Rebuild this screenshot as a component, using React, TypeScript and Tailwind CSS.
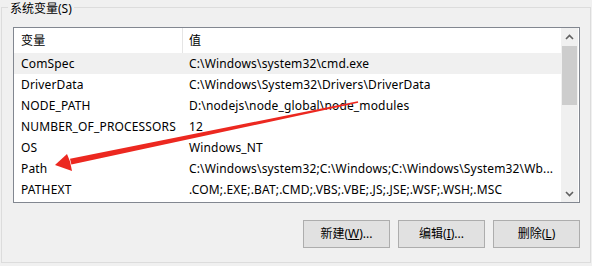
import React from "react";

const rows: [string, string][] = [
  ["ComSpec", "C:\\Windows\\system32\\cmd.exe"],
  ["DriverData", "C:\\Windows\\System32\\Drivers\\DriverData"],
  ["NODE_PATH", "D:\\nodejs\\node_global\\node_modules"],
  ["NUMBER_OF_PROCESSORS", "12"],
  ["OS", "Windows_NT"],
  ["Path", "C:\\Windows\\system32;C:\\Windows;C:\\Windows\\System32\\Wb..."],
  ["PATHEXT", ".COM;.EXE;.BAT;.CMD;.VBS;.VBE;.JS;.JSE;.WSF;.WSH;.MSC"],
];

function Chevron({ up }: { up: boolean }) {
  return (
    <svg width="9" height="6" viewBox="0 0 9 6">
      <polyline
        points={up ? "1,5 4.5,1.5 8,5" : "1,1 4.5,4.5 8,1"}
        fill="none"
        stroke="#606060"
        strokeWidth="1.6"
      />
    </svg>
  );
}

export default function App() {
  return (
    <div
      className="relative w-[592px] h-[266px] bg-[#f0f0f0] text-[12px] text-black overflow-hidden"
      style={{ fontFamily: '"Noto Sans", "Noto Sans CJK SC", sans-serif' }}
    >
      <div className="relative ml-[1px] mt-[7px] w-[590px] h-[256px] border border-[#dcdcdc]">
        <div className="absolute left-[6px] top-[-7px] bg-[#f0f0f0] px-[2px] leading-[15px]">
          系统变量(S)
        </div>
        <div className="ml-[11px] mt-[19px] w-[567px] h-[176px] border border-[#828790] bg-white flex">
          <div className="w-[547px] flex flex-col tracking-[0.15px]">
            <div className="flex h-[25px] items-center">
              <div className="w-[168px] h-full flex items-center pl-[7px]">变量</div>
              <div className="w-[1px] h-full bg-[#e5e5e5]" />
              <div className="flex-1 pl-[6px]">值</div>
            </div>
            {rows.map(([k, v], i) => (
              <div
                key={k}
                className={`flex h-[21px] items-center whitespace-nowrap ${i === 0 ? "bg-[#f0f0f0]" : ""}`}
              >
                <div className="w-[169px] pl-[7px]">{k}</div>
                <div className="flex-1 pl-[6px] overflow-hidden">{v}</div>
              </div>
            ))}
          </div>
          <div className="w-[17px] h-full bg-[#f0f0f0] flex flex-col">
            <div className="h-[18px] flex items-center justify-center">
              <Chevron up />
            </div>
            <div className="h-[59px] w-[15px] mx-[1px] bg-[#cdcdcd]" />
            <div className="flex-1" />
            <div className="h-[17px] flex items-center justify-center">
              <Chevron up={false} />
            </div>
          </div>
        </div>
        <div className="ml-[11px] mt-[17px] w-[567px] flex justify-end gap-[8px]">
          <button className="w-[87px] h-[28px] bg-[#e1e1e1] border border-[#adadad]">
            新建(<span className="underline">W</span>)...
          </button>
          <button className="w-[87px] h-[28px] bg-[#e1e1e1] border border-[#adadad]">
            编辑(<span className="underline">I</span>)...
          </button>
          <button className="w-[87px] h-[28px] bg-[#e1e1e1] border border-[#adadad]">
            删除(<span className="underline">L</span>)
          </button>
        </div>
      </div>
      <svg
        className="absolute left-0 top-0 pointer-events-none"
        width="592"
        height="266"
        viewBox="0 0 592 266"
      >
        <polygon
          points="358.2,102.8 357.8,101.2 70,158.8 71.4,164.6"
          fill="#ec2820"
        />
        <polygon points="55,165 67,154 70,161.5 72,171" fill="#ec2820" />
      </svg>
    </div>
  );
}
